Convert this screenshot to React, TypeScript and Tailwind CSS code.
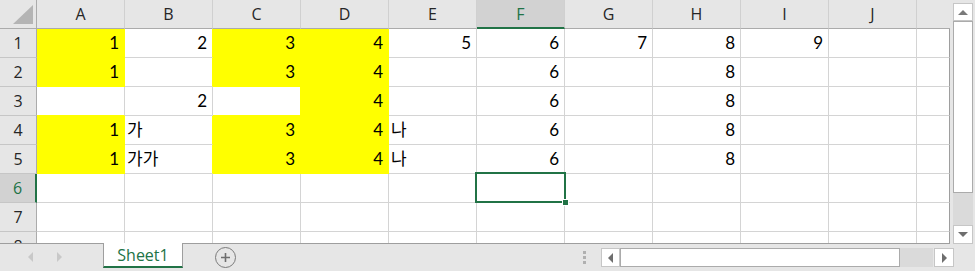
import React from "react";

type Cell = { v: string; left?: boolean } | null;

const COLS = ["A", "B", "C", "D", "E", "F", "G", "H", "I", "J"];

const fills: boolean[][] = [
  [true, false, true, true, false, false, false, false, false, false],
  [true, false, true, true, false, false, false, false, false, false],
  [false, false, false, true, false, false, false, false, false, false],
  [true, false, true, true, false, false, false, false, false, false],
  [true, false, true, true, false, false, false, false, false, false],
  [false, false, false, false, false, false, false, false, false, false],
  [false, false, false, false, false, false, false, false, false, false],
  [false, false, false, false, false, false, false, false, false, false],
];

const n = (v: string): Cell => ({ v });
const k = (v: string): Cell => ({ v, left: true });

const data: Cell[][] = [
  [n("1"), n("2"), n("3"), n("4"), n("5"), n("6"), n("7"), n("8"), n("9"), null],
  [n("1"), null, n("3"), n("4"), null, n("6"), null, n("8"), null, null],
  [null, n("2"), null, n("4"), null, n("6"), null, n("8"), null, null],
  [n("1"), k("가"), n("3"), n("4"), k("나"), n("6"), null, n("8"), null, null],
  [n("1"), k("가가"), n("3"), n("4"), k("나"), n("6"), null, n("8"), null, null],
  [null, null, null, null, null, null, null, null, null, null],
  [null, null, null, null, null, null, null, null, null, null],
  [null, null, null, null, null, null, null, null, null, null],
];

function isFill(r: number, c: number) {
  return !!(fills[r] && fills[r][c]);
}

function DataCell({ r, c }: { r: number; c: number }) {
  const f = isFill(r, c);
  const rightY = f || isFill(r, c + 1);
  const bottomY = f || isFill(r + 1, c);
  const cell = data[r][c];
  const selected = r === 5 && c === 5;
  return (
    <div
      className={
        "relative shrink-0 w-[88px] h-[29px] border-r border-b " +
        (f ? "bg-[#ffff00] " : "bg-white ") +
        (rightY ? "border-r-[#ffff00] " : "border-r-[#d4d4d4] ") +
        (bottomY ? "border-b-[#ffff00]" : "border-b-[#d4d4d4]")
      }
    >
      {cell && (
        <div
          className={
            "whitespace-nowrap text-[17px] leading-[28px] text-black font-['Lato','Noto_Sans_CJK_KR',sans-serif] " +
            (cell.left ? "text-left pl-[2px]" : "text-right pr-[5px]")
          }
        >
          {cell.v}
        </div>
      )}
      {selected && (
        <div className="absolute left-[-2px] top-[-2px] w-[91px] h-[31px] border-2 border-[#217346] z-10">
          <div className="absolute right-[-5px] bottom-[-5px] w-[7px] h-[7px] bg-[#217346] border border-white" />
        </div>
      )}
    </div>
  );
}

function ColHeader({ label }: { label: string }) {
  const sel = label === "F";
  return (
    <div
      className={
        "shrink-0 w-[88px] h-[29px] border-r border-r-[#d0d0d0] flex items-center justify-center text-[16px] font-['Open_Sans',sans-serif] " +
        (sel
          ? "bg-[#d2d2d2] border-b-2 border-b-[#217346] text-[#217346]"
          : "bg-[#e6e6e6] border-b border-b-[#ababab] text-[#262626]")
      }
    >
      {label}
    </div>
  );
}

function RowHeader({ num }: { num: number }) {
  const sel = num === 6;
  return (
    <div
      className={
        "shrink-0 w-[37px] h-[29px] border-b border-b-[#c6c6c6] flex items-center justify-center text-[16px] font-['Open_Sans',sans-serif] " +
        (sel
          ? "bg-[#d2d2d2] border-r-2 border-r-[#217346] text-[#217346]"
          : "bg-[#e6e6e6] border-r border-r-[#ababab] text-[#262626]")
      }
    >
      {num}
    </div>
  );
}

function Tri({ dir, color }: { dir: "left" | "right" | "up" | "down"; color: string }) {
  const pts: Record<string, string> = {
    left: "6,0 6,10 1,5",
    right: "1,0 1,10 6,5",
    up: "0,6 10,6 5,1",
    down: "0,1 10,1 5,6",
  };
  const horiz = dir === "left" || dir === "right";
  return (
    <svg width={horiz ? 7 : 10} height={horiz ? 10 : 7} viewBox={horiz ? "0 0 7 10" : "0 0 10 7"}>
      <polygon points={pts[dir]} fill={color} />
    </svg>
  );
}

export default function App() {
  return (
    <div className="w-[975px] h-[271px] bg-[#e6e6e6] overflow-hidden flex flex-col select-none">
      {/* top: grid + vertical scrollbar */}
      <div className="flex h-[244px] shrink-0">
        <div className="w-[950px] h-[244px] overflow-hidden border-b border-b-[#9e9e9e] bg-white">
          {/* header row */}
          <div className="flex">
            <div className="shrink-0 w-[37px] h-[29px] bg-[#e6e6e6] border-r border-b border-[#ababab]">
              <svg width="36" height="28" viewBox="0 0 36 28" className="block">
                <polygon points="33,5 33,24 13,24" fill="#b4b4b4" />
              </svg>
            </div>
            {COLS.map((c) => (
              <ColHeader key={c} label={c} />
            ))}
            <div className="shrink-0 w-[33px] h-[29px] bg-[#e6e6e6] border-b border-b-[#ababab]" />
          </div>
          {data.map((row, r) => (
            <div key={r} className="flex">
              <RowHeader num={r + 1} />
              {row.map((_, c) => (
                <DataCell key={c} r={r} c={c} />
              ))}
              <div className="shrink-0 w-[33px] h-[29px] bg-white border-b border-b-[#d4d4d4] border-r border-r-[#9e9e9e]" />
            </div>
          ))}
        </div>
        {/* vertical scrollbar */}
        <div className="w-[25px] h-[244px] pl-[3px] pt-[3px] flex flex-col">
          <div className="w-[20px] h-[18px] bg-white border border-[#c6c6c6] flex items-center justify-center">
            <Tri dir="up" color="#7a7a7a" />
          </div>
          <div className="w-[20px] h-[172px] bg-white border border-[#ababab]" />
          <div className="w-[20px] flex-1 bg-[#dadada]" />
          <div className="w-[20px] h-[19px] bg-white border border-[#c6c6c6] flex items-center justify-center">
            <Tri dir="down" color="#6e6e6e" />
          </div>
        </div>
      </div>

      {/* bottom: sheet tabs + horizontal scrollbar */}
      <div className="flex items-start h-[27px]">
        <div className="shrink-0 w-[103px] h-[27px] flex items-center pl-[27px] gap-[22px] pb-[1px]">
          <Tri dir="left" color="#c8c8c8" />
          <Tri dir="right" color="#c8c8c8" />
        </div>
        <div className="shrink-0 w-[80px] h-[25px] -mt-[1px] bg-white border-x border-x-[#9e9e9e] border-b-2 border-b-[#217346] flex items-center justify-center text-[16px] text-[#217346] font-['Open_Sans',sans-serif]">
          Sheet1
        </div>
        <div className="shrink-0 ml-[32px] mt-[3px] w-[21px] h-[21px] rounded-full border-[1.5px] border-[#7a7a7a] flex items-center justify-center">
          <svg width="11" height="11" viewBox="0 0 11 11">
            <path d="M5.5 1v9M1 5.5h9" stroke="#6e6e6e" strokeWidth="1.6" />
          </svg>
        </div>
        <div className="shrink-0 ml-[347px] mt-[7px] w-[3px] flex flex-col gap-[2px]">
          <div className="w-[3px] h-[3px] bg-[#b0b0b0]" />
          <div className="w-[3px] h-[3px] bg-[#b0b0b0]" />
          <div className="w-[3px] h-[3px] bg-[#b0b0b0]" />
        </div>
        <div className="shrink-0 ml-[15px] mt-[4px] flex h-[19px]">
          <div className="w-[19px] h-[19px] bg-white border border-[#c6c6c6] flex items-center justify-center">
            <Tri dir="left" color="#6e6e6e" />
          </div>
          <div className="w-[280px] h-[19px] bg-white border border-[#ababab]" />
          <div className="w-[33px] h-[19px] bg-[#dadada]" />
          <div className="w-[1px]" />
          <div className="w-[20px] h-[19px] bg-white border border-[#c6c6c6] flex items-center justify-center">
            <Tri dir="right" color="#6e6e6e" />
          </div>
        </div>
      </div>
    </div>
  );
}
